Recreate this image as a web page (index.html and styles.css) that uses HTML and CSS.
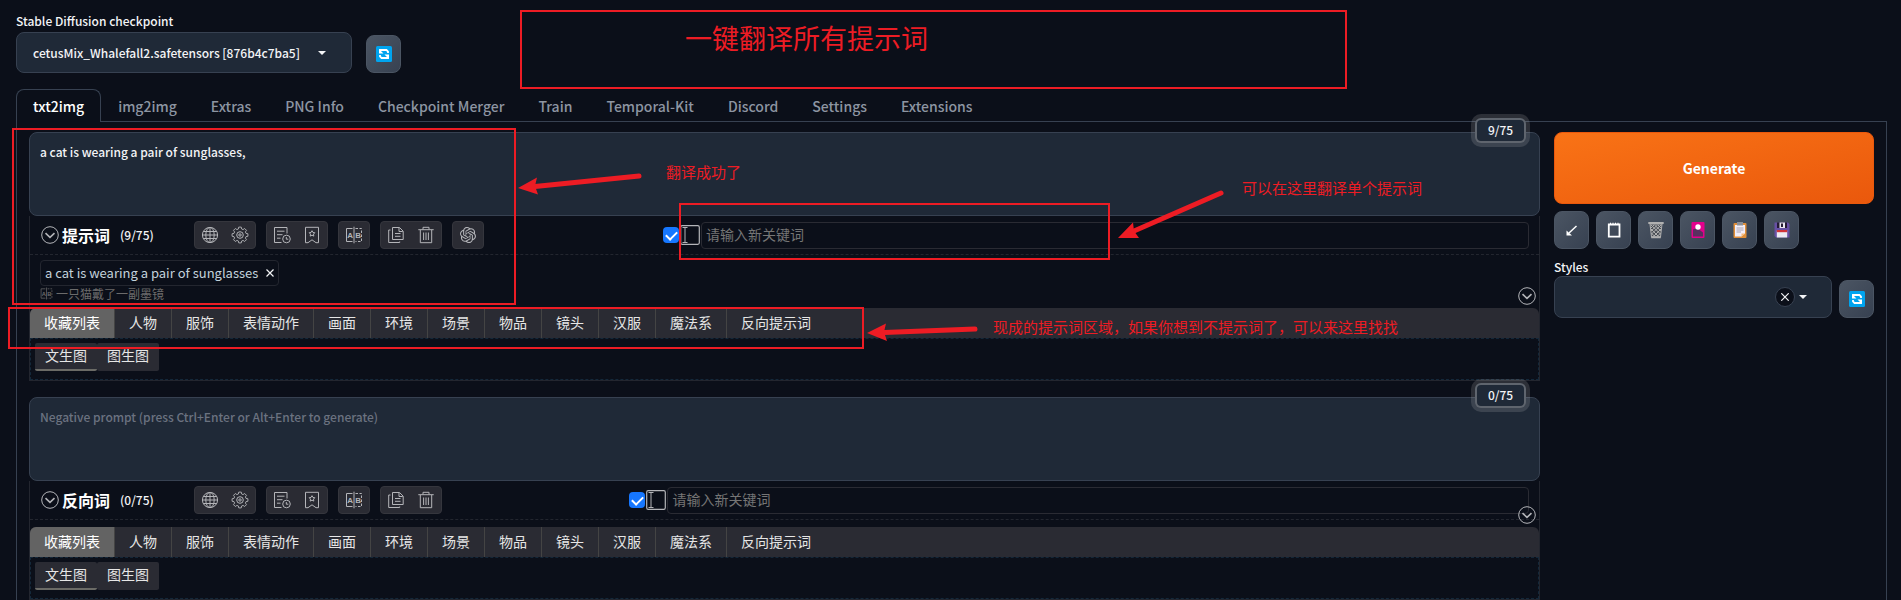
FILE: index.html
```html
<!DOCTYPE html>
<html lang="zh-CN">
<head>
<meta charset="utf-8">
<title>Stable Diffusion</title>
<link rel="stylesheet" href="styles.css">
</head>
<body>
<svg class="sprite" aria-hidden="true">
  <symbol id="i-chevron" viewBox="0 0 18 18"><circle cx="9" cy="9" r="8.3"/><path d="M4.500 7.200 9 11.300l4.500-4.100" stroke-width="1.600"/></symbol>
  <symbol id="i-globe" viewBox="0 0 18 18"><circle cx="9" cy="9" r="7.600"/><ellipse cx="9" cy="9" rx="4.200" ry="7.600"/><path d="M9 1.400v15.200M2.500 5.500h13M1.400 9h15.200M2.500 12.500h13"/></symbol>
  <symbol id="i-gear" viewBox="0 0 18 18"><path d="M7.600 1.200h2.800l.4 2.100 1.600.7 1.800-1.200 2 2-1.200 1.800.7 1.600 2.100.4v2.800l-2.100.4-.7 1.600 1.200 1.800-2 2-1.800-1.200-1.600.7-.4 2.100H7.600l-.4-2.100-1.600-.7-1.800 1.200-2-2L3 13.400l-.7-1.600-2.100-.4V8.600l2.100-.4L3 6.600 1.800 4.800l2-2L5.600 4l1.600-.7z" transform="translate(.9 0) scale(.9)"/><circle cx="9" cy="9" r="3.300"/><circle cx="9" cy="9" r="1.200"/></symbol>
  <symbol id="i-history" viewBox="0 0 18 18"><path d="M14 7.500V1.500H1.500v15h7M4 5.200h7.500M4 8.700h5.500M4 12.200h3.500"/><circle cx="13.500" cy="13" r="3.800"/><path d="M13.300 11v2.200h2"/></symbol>
  <symbol id="i-bookmark" viewBox="0 0 18 18"><path d="M2.500 1.300h13v15.400H13L9 13.800l-4 2.900H2.500zM9 4.700l.9 1.700 1.900.3-1.300 1.400.3 2L9 9.200l-1.800.9.3-2-1.300-1.400 1.900-.3z"/></symbol>
  <symbol id="i-translate" viewBox="0 0 18 18"><path d="M7.500 2.500h-6v13h6M9 .7v16.600"/><path d="M10.500 2.500h6v13h-6" stroke-dasharray="2.500 1.500"/><text x="2.300" y="12.300">A</text><text x="10.200" y="12.300">B</text></symbol>
  <symbol id="i-copy" viewBox="0 0 18 18"><path d="M5.500 1.500h7l3.700 3.700v8.300H5.500zM12 1.800v3.700h3.800M8 7.500h5.500M8 10.300h5.500M3.500 4H1.700v12.500h11v-1"/></symbol>
  <symbol id="i-trash" viewBox="0 0 18 18"><path d="M1.300 3.700h15.400M6 3.500V1.300h6v2.200M3.300 4v12.700h11.400V4M6.600 6.500v7.500M9 6.500v7.500M11.400 6.500v7.500"/></symbol>
  <symbol id="i-gpt" viewBox="0 0 24 24"><path stroke="none" fill="currentColor" d="M22.2819 9.8211a5.9847 5.9847 0 0 0-.5157-4.9108 6.0462 6.0462 0 0 0-6.5098-2.9A6.0651 6.0651 0 0 0 4.9807 4.1818a5.9847 5.9847 0 0 0-3.9977 2.9 6.0462 6.0462 0 0 0 .7427 7.0966 5.98 5.98 0 0 0 .511 4.9107 6.051 6.051 0 0 0 6.5146 2.9001A5.9847 5.9847 0 0 0 13.2599 24a6.0557 6.0557 0 0 0 5.7718-4.2058 5.9894 5.9894 0 0 0 3.9977-2.9001 6.0557 6.0557 0 0 0-.7475-7.0729zm-9.022 12.6081a4.4755 4.4755 0 0 1-2.8764-1.0408l.1419-.0804 4.7783-2.7582a.7948.7948 0 0 0 .3927-.6813v-6.7369l2.02 1.1686a.071.071 0 0 1 .038.052v5.5826a4.504 4.504 0 0 1-4.4945 4.4944zm-9.6607-4.1254a4.4708 4.4708 0 0 1-.5346-3.0137l.142.0852 4.783 2.7582a.7712.7712 0 0 0 .7806 0l5.8428-3.3685v2.3324a.0804.0804 0 0 1-.0332.0615L9.74 19.9502a4.4992 4.4992 0 0 1-6.1408-1.6464zM2.3408 7.8956a4.485 4.485 0 0 1 2.3655-1.9728V11.6a.7664.7664 0 0 0 .3879.6765l5.8144 3.3543-2.0201 1.1685a.0757.0757 0 0 1-.071 0l-4.8303-2.7865A4.504 4.504 0 0 1 2.3408 7.872zm16.5963 3.8558L13.1038 8.364 15.1192 7.2a.0757.0757 0 0 1 .071 0l4.8303 2.7913a4.4944 4.4944 0 0 1-.6765 8.1042v-5.6772a.79.79 0 0 0-.407-.667zm2.0107-3.0231l-.142-.0852-4.7735-2.7818a.7759.7759 0 0 0-.7854 0L9.409 9.2297V6.8974a.0662.0662 0 0 1 .0284-.0615l4.8303-2.7866a4.4992 4.4992 0 0 1 6.6802 4.66zM8.3065 12.863l-2.02-1.1638a.0804.0804 0 0 1-.038-.0567V6.0742a4.4992 4.4992 0 0 1 7.3757-3.4537l-.142.0805L8.704 5.459a.7948.7948 0 0 0-.3927.6813zm1.0976-2.3654l2.602-1.4998 2.6069 1.4998v2.9994l-2.5974 1.4997-2.6067-1.4997Z"/></symbol>
  <symbol id="i-cursor" viewBox="0 0 20 20"><rect x=".7" y=".7" width="18.600" height="18.600" rx="1.500" stroke-width="1.200"/><path d="M2.500 2.500h5M2.500 17.500h5M5 2.500v15"/></symbol>
  <symbol id="i-refresh" viewBox="0 0 16 16"><rect width="16" height="16" rx="1.500" fill="#00a4ef" stroke="none"/><path d="M4 7V4h6.500l1.500 1.500V7M12 9v3H5.500L4 10.500V9" stroke="#fff" stroke-width="1.800"/><path d="M3 3v4.500h4.500zM13 13V8.500H8.500z" fill="#fff" stroke="none"/></symbol>
</svg>

<main class="page">
  <header class="quick">
    <div class="field checkpoint">
      <label for="ckpt">Stable Diffusion checkpoint</label>
      <div class="select-box">
        <select id="ckpt"><option>cetusMix_Whalefall2.safetensors [876b4c7ba5]</option></select>
        <span class="caret"></span>
      </div>
    </div>
    <button class="tool" aria-label="Refresh checkpoints"><svg width="16" height="16"><use href="#i-refresh"/></svg></button>
  </header>

  <nav class="tabs">
    <button class="tab active">txt2img</button>
    <button class="tab">img2img</button>
    <button class="tab">Extras</button>
    <button class="tab">PNG Info</button>
    <button class="tab">Checkpoint Merger</button>
    <button class="tab">Train</button>
    <button class="tab">Temporal-Kit</button>
    <button class="tab">Discord</button>
    <button class="tab">Settings</button>
    <button class="tab">Extensions</button>
  </nav>

  <section class="panel">
    <div class="prompts">
      <div class="prompt">
        <span class="counter">9/75</span>
        <textarea class="text" aria-label="Prompt">a cat is wearing a pair of sunglasses,</textarea>
        <div class="helper">
          <div class="toolbar">
            <div class="left">
              <div class="heading"><svg class="ico" width="18" height="18"><use href="#i-chevron"/></svg><strong>提示词</strong><span class="count">(9/75)</span></div>
              <div class="group"><button aria-label="Language"><svg class="ico" width="18" height="18"><use href="#i-globe"/></svg></button><button aria-label="Settings"><svg class="ico" width="18" height="18"><use href="#i-gear"/></svg></button></div>
              <div class="group"><button aria-label="History"><svg class="ico" width="18" height="18"><use href="#i-history"/></svg></button><button aria-label="Favorites"><svg class="ico" width="18" height="18"><use href="#i-bookmark"/></svg></button></div>
              <div class="group"><button aria-label="Translate"><svg class="ico" width="18" height="18"><use href="#i-translate"/></svg></button></div>
              <div class="group"><button aria-label="Copy"><svg class="ico" width="18" height="18"><use href="#i-copy"/></svg></button><button aria-label="Delete"><svg class="ico" width="18" height="18"><use href="#i-trash"/></svg></button></div>
              <div class="group"><button aria-label="ChatGPT"><svg class="ico" width="16" height="16"><use href="#i-gpt"/></svg></button></div>
            </div>
            <div class="right">
              <input class="check" type="checkbox" checked aria-label="启用">
              <svg class="ico" width="20" height="20"><use href="#i-cursor"/></svg>
              <input class="keyword" type="text" placeholder="请输入新关键词" aria-label="新关键词">
            </div>
          </div>
          <div class="tags">
            <div class="tag"><span>a cat is wearing a pair of sunglasses</span><button aria-label="Remove"><svg class="ico bright" width="8" height="8" viewBox="0 0 8 8"><path d="m.5.5 7 7m0-7-7 7"/></svg></button></div>
            <div class="local"><svg class="ico" width="13" height="13"><use href="#i-translate"/></svg><span>一只猫戴了一副墨镜</span></div>
            <button class="fold" aria-label="展开"><svg class="ico" width="18" height="18"><use href="#i-chevron"/></svg></button>
          </div>
          <div class="cats"><button class="active">收藏列表</button><button>人物</button><button>服饰</button><button>表情动作</button><button>画面</button><button>环境</button><button>场景</button><button>物品</button><button>镜头</button><button>汉服</button><button>魔法系</button><button>反向提示词</button></div>
          <div class="subs"><button class="active">文生图</button><button>图生图</button></div>
        </div>
      </div>

      <div class="prompt">
        <span class="counter">0/75</span>
        <textarea class="text" aria-label="Negative prompt" placeholder="Negative prompt (press Ctrl+Enter or Alt+Enter to generate)"></textarea>
        <div class="helper">
          <div class="toolbar">
            <div class="left">
              <div class="heading"><svg class="ico" width="18" height="18"><use href="#i-chevron"/></svg><strong>反向词</strong><span class="count">(0/75)</span></div>
              <div class="group"><button aria-label="Language"><svg class="ico" width="18" height="18"><use href="#i-globe"/></svg></button><button aria-label="Settings"><svg class="ico" width="18" height="18"><use href="#i-gear"/></svg></button></div>
              <div class="group"><button aria-label="History"><svg class="ico" width="18" height="18"><use href="#i-history"/></svg></button><button aria-label="Favorites"><svg class="ico" width="18" height="18"><use href="#i-bookmark"/></svg></button></div>
              <div class="group"><button aria-label="Translate"><svg class="ico" width="18" height="18"><use href="#i-translate"/></svg></button></div>
              <div class="group"><button aria-label="Copy"><svg class="ico" width="18" height="18"><use href="#i-copy"/></svg></button><button aria-label="Delete"><svg class="ico" width="18" height="18"><use href="#i-trash"/></svg></button></div>
            </div>
            <div class="right">
              <input class="check" type="checkbox" checked aria-label="启用">
              <svg class="ico" width="20" height="20"><use href="#i-cursor"/></svg>
              <input class="keyword" type="text" placeholder="请输入新关键词" aria-label="新关键词">
            </div>
          </div>
          <div class="tags empty">
            <button class="fold" aria-label="展开"><svg class="ico" width="18" height="18"><use href="#i-chevron"/></svg></button>
          </div>
          <div class="cats"><button class="active">收藏列表</button><button>人物</button><button>服饰</button><button>表情动作</button><button>画面</button><button>环境</button><button>场景</button><button>物品</button><button>镜头</button><button>汉服</button><button>魔法系</button><button>反向提示词</button></div>
          <div class="subs"><button class="active">文生图</button><button>图生图</button></div>
        </div>
      </div>
    </div>

    <aside class="side">
      <button class="generate">Generate</button>
      <div class="tools">
        <button class="tool" aria-label="Read parameters"><svg width="16" height="16" viewBox="0 0 16 16" fill="none" stroke="#fff" stroke-width="1.500"><path d="M12.500 4 5 11"/><path d="M2.500 8.500v5H8z" fill="#fff" stroke="none"/></svg></button>
        <button class="tool" aria-label="Paste prompt"><svg width="16" height="16" viewBox="0 0 16 16" fill="none" stroke="#fff"><path d="M2.800 2.500h10.700v12.200H2.800z" stroke-width="1.800"/><path d="M4.500.7v2M7 .7v2M9.500.7v2M12 .7v2"/></svg></button>
        <button class="tool" aria-label="Clear prompt"><svg width="18" height="18" viewBox="0 0 18 18" fill="none" stroke="#b0b0b0"><path d="M3 3h12l-1.500 13h-9z" fill="#4b4f56"/><path d="m4 4 9.500 9M7.500 4l6.500 6M11 4l3.500 3.500M4 8l7.500 7.500M4.300 12l3.500 3.500M14 4l-9.500 9M10.500 4 4 10M7 4 3.500 7.500M14 8l-7.500 7.500M13.700 12l-3.500 3.500"/><path d="M1.300 2h15.400M4.200 16.200h9.600" stroke-width="2"/></svg></button>
        <button class="tool" aria-label="Extra networks"><svg width="16" height="18" viewBox="0 0 16 18"><rect x="1.500" y="1" width="13" height="16" rx="1" fill="#e3008c"/><path d="M3 8.500 7 7l6 4.500V15.500H3z" fill="#59305f"/><circle cx="8" cy="6" r="2.700" fill="#fff"/></svg></button>
        <button class="tool" aria-label="Apply styles"><svg width="16" height="18" viewBox="0 0 16 18"><rect x="1.500" y="2" width="13" height="15" rx="1" fill="#e08f3a"/><path d="M3 4h10v8.500L9.500 15.500H3z" fill="#f3eef8"/><path d="M4.500 7h7M4.500 9h7M4.500 11h4.500" stroke="#aaa4b2"/><path d="M9.500 15.500v-3H13z" fill="#f7b978"/><path d="M5 1h6v3.500H5z" fill="#8b8f98"/></svg></button>
        <button class="tool" aria-label="Save style"><svg width="16" height="18" viewBox="0 0 16 18"><path d="M.5 1.500H14l1.500 1.500v13.500H2L.5 15z" fill="#6750a4"/><path d="M3 1.500h10v5.500H3z" fill="#241a33"/><path d="M5.500 1.500h5.500v5.500H5.500z" fill="#e9e6ee"/><path d="M7 2.500h2v3.500H7z" fill="#241a33"/><path d="M2.800 9.500h10.400v7H2.800z" fill="#eceaf2"/><path d="M2.800 9h10.400v2.200H2.800z" fill="#d13438"/></svg></button>
      </div>
      <div class="styles-row">
        <div class="field styles-field">
          <label for="styles">Styles</label>
          <div class="select-box tall">
            <select id="styles"><option></option></select>
            <button class="clear" aria-label="Clear styles"><svg class="ico bright" width="8" height="8" viewBox="0 0 8 8"><path d="m.3.3 7.400 7.400m0-7.400L.3 7.700"/></svg></button>
            <span class="caret far"></span>
          </div>
        </div>
        <button class="tool" aria-label="Refresh styles"><svg width="16" height="16"><use href="#i-refresh"/></svg></button>
      </div>
    </aside>
  </section>
</main>

<div class="marks">
  <div class="box banner"></div>
  <div class="box result"></div>
  <div class="box single"></div>
  <div class="box library"></div>
  <p class="note title">一键翻译所有提示词</p>
  <p class="note done">翻译成功了</p>
  <p class="note here">可以在这里翻译单个提示词</p>
  <p class="note ready">现成的提示词区域，如果你想到不提示词了，可以来这里找找</p>
  <svg class="arrows" width="1300" height="400" fill="#ed1c24" stroke="#ed1c24" stroke-width="5" stroke-linecap="round">
    <path d="M639 176 535 186.500"/><path stroke="none" d="M518 188 537 177.500 535 186 538 194.500z"/>
    <path d="M1221 193 1134 231"/><path stroke="none" d="M1118 238 1133 222.500 1134 231 1139 238z"/>
    <path d="M975 329 884 332.500"/><path stroke="none" d="M867 333 886 323.500 884 332 887 341z"/>
  </svg>
</div>
</body>
</html>
```
FILE: styles.css
```css
* { box-sizing: border-box; }
html { scrollbar-width: none; background: #0b0f19; }
body {
  margin: 0;
  position: relative;
  background: #0b0f19;
  color: #f3f4f6;
  font: 12px/18px "Noto Sans CJK SC", sans-serif;
}
button, input, select, textarea { font: inherit; color: inherit; margin: 0; }
button { border: 0; padding: 0; background: none; cursor: pointer; }
.sprite { display: none; }
.page { padding: 12px 14px 0 16px; }
.ico { display: block; flex: none; fill: none; stroke: #b4b5b9; color: #b4b5b9; stroke-width: 1; }
.ico.bright { stroke: #f3f4f6; stroke-width: 1.2; }
#i-translate text { font: bold 8px "Liberation Sans", sans-serif; fill: currentColor; stroke: none; }

/* Checkpoint row */
.quick { display: flex; align-items: flex-end; gap: 14px; margin-bottom: 16px; }
.checkpoint { width: 336px; }
.field label { display: block; font-weight: 500; }
.checkpoint label { margin-bottom: 2px; }
.select-box { position: relative; }
.select-box select {
  display: block;
  width: 100%;
  height: 41px;
  padding: 0 16px;
  appearance: none;
  border: 1px solid #374151;
  border-radius: 8px;
  background: #1f2937;
  font-weight: 500;
}
.select-box.tall select { height: 42px; }
.caret {
  position: absolute;
  top: 19px;
  right: 26px;
  border: 4px solid transparent;
  border-top-color: #f3f4f6;
  border-bottom: 0;
}
.tool {
  display: flex;
  align-items: center;
  justify-content: center;
  width: 35px;
  height: 38px;
  border: 1px solid #4b5563;
  border-radius: 8px;
  background: linear-gradient(to bottom right, #4b5563, #374151);
}
.tool svg { fill: none; }

/* Tabs */
.tabs { display: flex; border-bottom: 1px solid #374151; }
.tab {
  height: 33px;
  margin-bottom: -1px;
  padding: 0 16px;
  border: 1px solid transparent;
  border-bottom: 0;
  border-radius: 8px 8px 0 0;
  color: #8d95a2;
  font-size: 14px;
  font-weight: 500;
  line-height: 24px;
}
.tab.active { border-color: #374151; background: #0b0f19; color: #fff; }

.panel {
  display: flex;
  gap: 14px;
  padding: 10px 12px 12px;
  border: 1px solid #374151;
  border-top: 0;
}
.prompts { flex: 1; display: flex; flex-direction: column; gap: 16px; min-width: 0; }
.prompt { position: relative; }
.text {
  display: block;
  width: 100%;
  height: 84px;
  padding: 10px;
  resize: none;
  border: 1px solid #374151;
  border-radius: 8px;
  background: #1f2937;
  font-weight: 500;
}
.text::placeholder { color: #6b7280; opacity: 1; }
.counter {
  position: absolute;
  top: -14px;
  right: 14px;
  width: 51px;
  height: 25px;
  border: 2px solid rgba(192, 192, 192, .4);
  border-radius: 6px;
  background: #1f2937;
  box-shadow: 0 0 0 4px rgba(192, 192, 192, .18);
  text-align: center;
  font-weight: 500;
  line-height: 20px;
}

/* Prompt helper */
.helper { border: 1px solid #23262f; border-top: 0; }
.toolbar {
  display: flex;
  align-items: center;
  height: 39px;
  padding: 0 10px;
  border-bottom: 1px dashed #23262f;
}
.left { flex: 1 0 auto; display: flex; gap: 10px; }
.heading { display: flex; align-items: center; width: 144px; padding-left: 1px; }
.heading strong { margin-left: 3px; font-size: 16px; color: #fff; }
.heading .count { margin-left: 10px; font-weight: 500; }
.group {
  display: flex;
  align-items: center;
  height: 28px;
  border: 1px solid #35363d;
  border-radius: 4px;
  background: #2a2b33;
}
.group button { display: flex; justify-content: center; width: 30px; }
.right { flex: 4 1 150px; display: flex; align-items: center; gap: 1px; }
.check {
  display: grid;
  place-items: center;
  appearance: none;
  width: 16px;
  height: 16px;
  border-radius: 4px;
  background: #1677ff;
}
.check::after {
  content: "";
  width: 5px;
  height: 9px;
  margin-bottom: 2px;
  border: solid #fff;
  border-width: 0 2px 2px 0;
  transform: rotate(45deg);
}
.keyword {
  flex: 1;
  min-width: 0;
  height: 27px;
  padding: 0 4px 2px;
  border: 1px solid #2a2b33;
  border-radius: 4px;
  background: transparent;
  font-size: 14px;
}
.keyword::placeholder { color: #757575; opacity: 1; }
.tags { position: relative; height: 53px; padding: 5px 10px 0; }
.tags.empty { height: 7px; }
.tag {
  display: flex;
  align-items: center;
  gap: 8px;
  width: max-content;
  height: 26px;
  padding: 0 4px;
  border: 1px solid #23262f;
  border-radius: 4px;
  color: #c3d2dc;
  font-size: 13px;
}
.local { display: flex; align-items: center; gap: 3px; height: 15px; color: #6b6b6b; }
.local .ico { stroke: #6b6b6b; color: #6b6b6b; }
.fold { position: absolute; right: 3px; bottom: 3px; }
.cats {
  display: flex;
  height: 30px;
  overflow: hidden;
  border-radius: 6px 6px 0 0;
  background: #2a2b33;
}
.cats button { padding: 0 14px 2px; border-right: 1px solid #444; font-size: 14px; color: #e6e6e6; }
.cats button:last-child { border-right: 0; }
.cats .active { background: #636363; color: #fff; }
.subs { display: flex; height: 42px; padding: 4px; border: 1px dashed #14283a; }
.subs button {
  width: 62px;
  height: 28px;
  padding-bottom: 2px;
  border-bottom: 2px solid #2a2b33;
  border-radius: 2px;
  background: #2a2b33;
  color: #e6e6e6;
  font-size: 14px;
}
.subs .active { border-bottom-color: #6b6b66; }

/* Side column */
.side { flex: 0 0 320px; }
.generate {
  display: block;
  width: 100%;
  height: 72px;
  border: 1px solid #ea580c;
  border-radius: 8px;
  background: linear-gradient(to bottom right, #f97316, #ea580c);
  color: #fff;
  font-size: 14px;
  font-weight: 700;
}
.tools { display: flex; gap: 7px; margin: 7px 0 9px; }
.styles-row { display: flex; align-items: flex-end; gap: 7px; }
.styles-field { flex: 1; }
.clear {
  position: absolute;
  top: 11px;
  right: 37px;
  display: grid;
  place-items: center;
  width: 20px;
  height: 20px;
  border: 1px solid #374151;
  border-radius: 50%;
  background: #0b0f19;
}
.caret.far { right: 25px; }

/* Red markup drawn over the page */
.marks { position: absolute; top: 0; left: 0; color: #ed1c24; pointer-events: none; }
.box { position: absolute; border: 2px solid #ed1c24; }
.banner { left: 520px; top: 10px; width: 827px; height: 79px; }
.result { left: 12px; top: 128px; width: 504px; height: 177px; }
.single { left: 679px; top: 203px; width: 431px; height: 57px; }
.library { left: 8px; top: 307px; width: 856px; height: 42px; }
.note { position: absolute; margin: 0; white-space: nowrap; font-size: 15px; line-height: 20px; }
.title { left: 685px; top: 18px; font-size: 27px; line-height: 40px; }
.done { left: 666px; top: 162px; }
.here { left: 1242px; top: 178px; }
.ready { left: 993px; top: 317px; }
.arrows { position: absolute; top: 0; left: 0; }
```
